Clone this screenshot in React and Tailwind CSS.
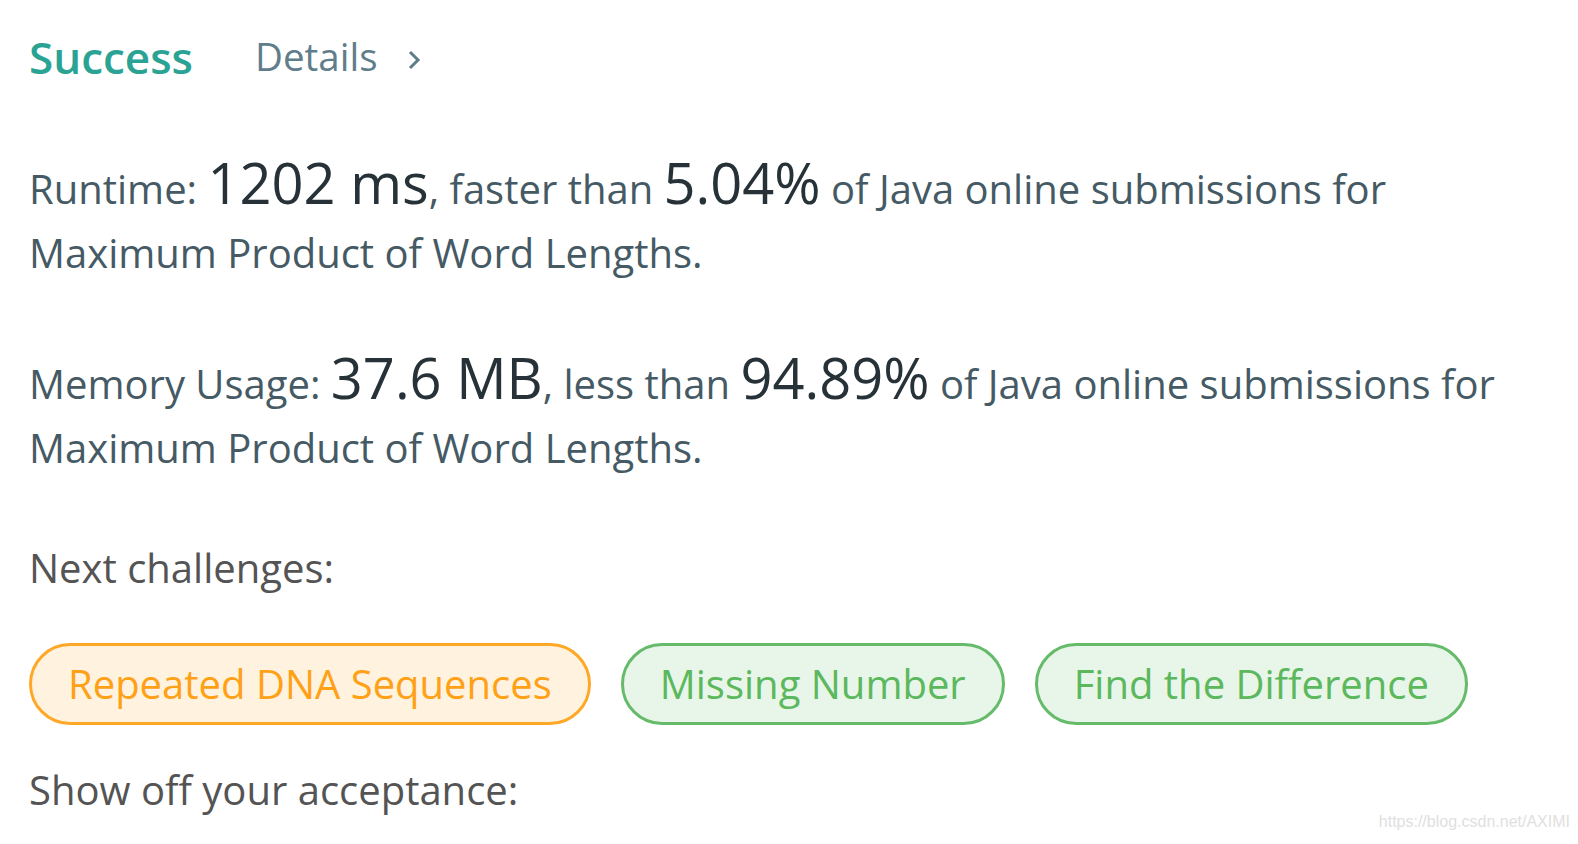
import React from "react";

const challenges = [
  { name: "Repeated DNA Sequences", tone: "orange" },
  { name: "Missing Number", tone: "green" },
  { name: "Find the Difference", tone: "green" },
];

const Stat = ({ label, value, cmp, pct }) => (
  <p className="text-[40px] leading-[64px] text-[#455a64]">
    {label}: <span className="text-[56px] leading-none text-[#263238]">{value}</span>, {cmp} than{" "}
    <span className="text-[56px] leading-none text-[#263238]">{pct}</span> of Java online submissions for
    <br />
    Maximum Product of Word Lengths.
  </p>
);

export default function App() {
  return (
    <div className="relative min-h-[844px] bg-white pl-[29px] pt-[24px] font-['Open_Sans',sans-serif]">
      <div className="flex items-center">
        <h1 className="text-[44px] font-semibold text-[#2aa394]">Success</h1>
        <a className="ml-[62px] flex items-center text-[38.5px] text-[#607d8b]">
          Details
          <svg className="ml-[29px] mt-[6px]" width="14" height="22" viewBox="0 0 14 22" fill="none">
            <path d="M3 3l8 8-8 8" stroke="#607d8b" strokeWidth="3" />
          </svg>
        </a>
      </div>

      <div className="mt-[64px]">
        <Stat label="Runtime" value="1202 ms" cmp="faster" pct="5.04%" />
      </div>
      <div className="mt-[64px]">
        <Stat label="Memory Usage" value="37.6 MB" cmp="less" pct="94.89%" />
      </div>

      <p className="mt-[58px] text-[40px] text-[#545454]">Next challenges:</p>

      <div className="mt-[45px] flex gap-[30px]">
        {challenges.map((c) => (
          <span
            key={c.name}
            className={
              c.tone === "orange"
                ? "flex h-[82px] items-center rounded-full border-[3px] border-[#ffa726] bg-[#fff3e0] px-[36px] text-[40px] text-[#ffa116]"
                : "flex h-[82px] items-center rounded-full border-[3px] border-[#66bb6a] bg-[#e8f5e9] px-[36px] text-[40px] text-[#5cb85c]"
            }
          >
            {c.name}
          </span>
        ))}
      </div>

      <p className="mt-[35px] text-[40px] text-[#545454]">Show off your acceptance:</p>

      <span className="absolute bottom-[10px] right-[8px] font-['Liberation_Sans',sans-serif] text-[16px] text-[#e0e0e0]">
        https://blog.csdn.net/AXIMI
      </span>
    </div>
  );
}
